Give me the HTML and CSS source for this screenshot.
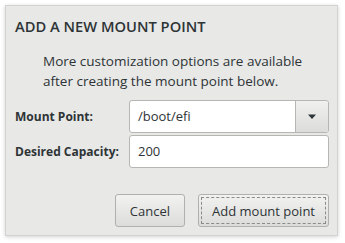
FILE: index.html
```html
<!DOCTYPE html>
<html lang="en">
<head>
  <meta charset="UTF-8">
  <title>Add a new mount point</title>
  <link rel="stylesheet" href="styles.css">
</head>
<body>

<div class="dialog">
  <h2 class="title">ADD A NEW MOUNT POINT</h2>
  <p class="hint">More customization options are available<br>after creating the mount point below.</p>

  <div class="form">
    <label class="lbl">Mount Point:</label>
    <div class="combo">
      <span class="combo-text">/boot/efi</span>
      <span class="combo-btn">
        <svg width="10" height="6" viewBox="0 0 10 6"><path d="M1 0.5h8l-4 4.5z" fill="#2e3436"/></svg>
      </span>
    </div>
    <label class="lbl">Desired Capacity:</label>
    <div class="entry">200</div>
  </div>

  <div class="actions">
    <button class="btn">Cancel</button>
    <button class="btn default"><span class="focus">Add mount point</span></button>
  </div>
</div>

</body>
</html>
```

FILE: styles.css
```css
body { margin: 0; background: #ffffff; font-family: "Open Sans", "DejaVu Sans", sans-serif; color: #2e3436; }
.dialog { margin: 5px; width: 331px; height: 229px; background: #e8e8e7; border: 1px solid #d2d2d0; box-shadow: 0 1px 4px rgba(0,0,0,0.18); position: relative; }
.title { margin: 0; padding: 10px 0 0 9px; font-size: 14.7px; font-weight: 600; line-height: 20px; }
.hint { margin: 0; padding: 15px 0 0 37px; font-size: 13.5px; line-height: 20px; }
.form { display: grid; grid-template-columns: 106px 200px; column-gap: 8px; row-gap: 2px; padding: 9px 0 0 9px; align-items: center; }
.lbl { font-size: 12px; font-weight: 700; color: #2e3436; }
.combo { display: flex; height: 31px; border: 1px solid #b6b6b3; border-radius: 3px; background: #fff; box-sizing: content-box; }
.combo-text { flex: 1; padding-left: 8px; font-size: 13px; line-height: 31px; }
.combo-btn { width: 32px; display: flex; align-items: center; justify-content: center; border-left: 1px solid #b6b6b3; background: linear-gradient(#f0f0ef, #dcdcda); border-radius: 0 3px 3px 0; }
.entry { height: 31px; border: 1px solid #b6b6b3; border-radius: 3px; background: #fff; padding-left: 8px; font-size: 13px; line-height: 31px; }
.actions { display: flex; justify-content: flex-end; gap: 13px; padding: 26px 8px 0 0; }
.btn { height: 33px; padding: 0 14px; font-family: inherit; font-size: 13px; color: #2e3436; background: linear-gradient(#f2f2f1, #dcdcda); border: 1px solid #b0b0ad; border-radius: 3px; }
.btn.default { padding: 2px; }
.focus { display: flex; align-items: center; height: 100%; padding: 0 10px; border: 1px dashed #8a8a88; box-sizing: border-box; }
```
